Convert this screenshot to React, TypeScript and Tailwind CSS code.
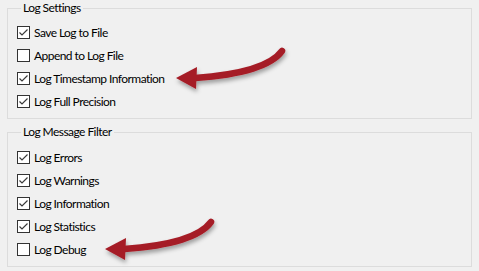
import React from "react";

function Check({ checked, label }: { checked: boolean; label: string }) {
  return (
    <div className="flex h-[23px] items-center">
      <div className="relative h-[13px] w-[13px] shrink-0 border border-[#333333] bg-white">
        {checked && (
          <svg className="absolute left-0 top-0" width="11" height="11" viewBox="0 0 11 11">
            <path d="M1.5 5.5 L4 8 L9.5 2.5" fill="none" stroke="#3a3a3a" strokeWidth="1.2" />
          </svg>
        )}
      </div>
      <span className="ml-[4px] text-[12px] leading-[16px] tracking-[-0.55px] text-black">{label}</span>
    </div>
  );
}

function Arrow({ dx, dy }: { dx: number; dy: number }) {
  return (
    <g transform={`translate(${dx} ${dy})`}>
      <g filter="url(#sh)">
        <path d="M282 51 Q266 73 195 78" fill="none" stroke="#a51c26" strokeWidth="6.5" strokeLinecap="round" />
        <path d="M176 78 L197 67 L196 89 Z" fill="#a51c26" />
      </g>
    </g>
  );
}

export default function App() {
  return (
    <div
      className="relative h-[271px] w-[479px] overflow-hidden bg-[#f0f0f0] px-[7px]"
      style={{ fontFamily: 'Lato, "Segoe UI", sans-serif' }}
    >
      <fieldset className="border border-[#dcdcdc] pb-[5px] pl-[9px] pt-[5px]">
        <legend className="ml-[4px] px-[2px] text-[12px] leading-[16px] tracking-[-0.55px] text-black">Log Settings</legend>
        <Check checked label="Save Log to File" />
        <Check checked={false} label="Append to Log File" />
        <Check checked label="Log Timestamp Information" />
        <Check checked label="Log Full Precision" />
      </fieldset>
      <fieldset className="mt-[5px] border border-[#dcdcdc] pb-[5px] pl-[9px] pt-[6px]">
        <legend className="ml-[4px] px-[2px] text-[12px] leading-[16px] tracking-[-0.55px] text-black">Log Message Filter</legend>
        <Check checked label="Log Errors" />
        <Check checked label="Log Warnings" />
        <Check checked label="Log Information" />
        <Check checked label="Log Statistics" />
        <Check checked={false} label="Log Debug" />
      </fieldset>
      <svg className="pointer-events-none absolute left-0 top-0" width="479" height="271" viewBox="0 0 479 271">
        <defs>
          <filter id="sh" x="-20%" y="-50%" width="140%" height="200%">
            <feDropShadow dx="1" dy="3" stdDeviation="2" floodColor="#000" floodOpacity="0.35" />
          </filter>
        </defs>
        <Arrow dx={0} dy={0} />
        <Arrow dx={-71} dy={171} />
      </svg>
    </div>
  );
}
